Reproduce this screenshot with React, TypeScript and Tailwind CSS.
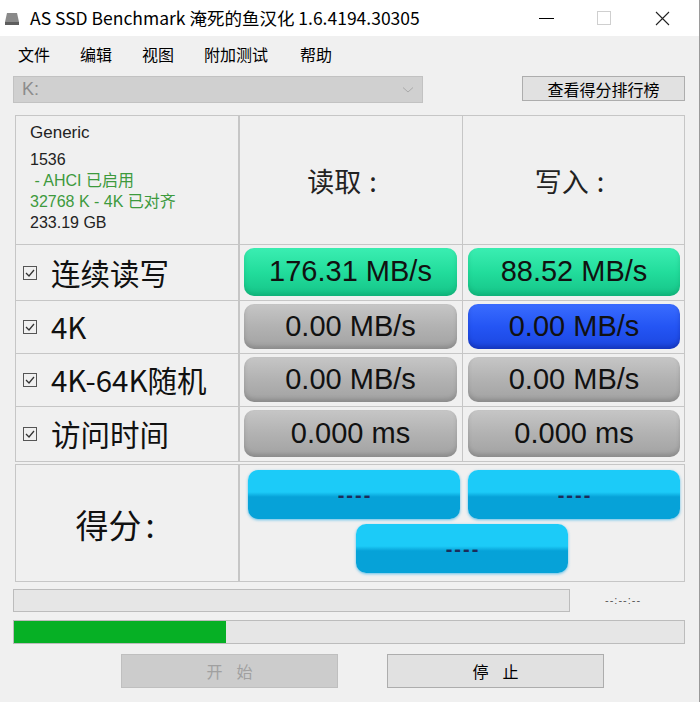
import React from "react"

const cjk = "font-['Noto_Sans_CJK_SC','Noto_Sans',sans-serif]"
const arial = "font-['Liberation_Sans','Noto_Sans_CJK_SC',sans-serif]"

const pillStyles: Record<string, string> = {
  green: "bg-linear-to-b from-[#3aeeb2] via-[#22dd9c] to-[#15c488] shadow-[inset_0_-3px_4px_rgba(0,120,70,0.25)]",
  gray: "bg-linear-to-b from-[#c6c6c6] via-[#b2b2b2] to-[#a2a2a2] shadow-[inset_0_-3px_4px_rgba(0,0,0,0.15)]",
  blue: "bg-linear-to-b from-[#3a6cff] via-[#2455f4] to-[#1b46e0] shadow-[inset_0_-3px_4px_rgba(0,0,80,0.25)]",
}

function CheckBox() {
  return (
    <svg width="14" height="14" viewBox="0 0 14 14" className="shrink-0">
      <rect x="0.5" y="0.5" width="13" height="13" fill="none" stroke="#555" />
      <path d="M3 7 L6 10 L11 4" fill="none" stroke="#333" strokeWidth="1.3" />
    </svg>
  )
}

function Pill({ value, color }: { value: string; color: string }) {
  return (
    <div
      className={`h-full w-full rounded-[10px] flex items-center justify-center text-[29px] text-[#111] ${arial} ${pillStyles[color]}`}
    >
      {value}
    </div>
  )
}

function ScorePill() {
  return (
    <div className="w-[212px] h-[49px] rounded-[10px] bg-linear-to-b from-[#1ccbf8] from-45% to-[#06a2d8] to-55% shadow-[0_1px_3px_rgba(0,160,230,0.6)] flex items-center justify-center">
      <span className={`text-[20px] font-black tracking-[2px] pl-[2px] text-[#1b2c5a] ${arial}`}>----</span>
    </div>
  )
}

const rows = [
  { label: "连续读写", read: "176.31 MB/s", write: "88.52 MB/s", rc: "green", wc: "green", h: "h-[56px]" },
  { label: "4K", read: "0.00 MB/s", write: "0.00 MB/s", rc: "gray", wc: "blue", h: "h-[53px]" },
  { label: "4K-64K随机", read: "0.00 MB/s", write: "0.00 MB/s", rc: "gray", wc: "gray", h: "h-[53px]" },
  { label: "访问时间", read: "0.000 ms", write: "0.000 ms", rc: "gray", wc: "gray", h: "h-[54px]" },
]

export default function App() {
  return (
    <div className={`w-[700px] h-[702px] bg-[#f0f0f0] overflow-hidden border-r border-[#9a9a9a] ${cjk}`}>
      {/* title bar */}
      <div className="h-[36px] bg-white flex items-center">
        <svg width="16" height="14" viewBox="0 0 16 14" className="ml-[4px]">
          <path d="M3 2 H13 L15 11 H1 Z" fill="#8a8a8a" />
          <rect x="1" y="11" width="14" height="3" fill="#5e5e5e" />
        </svg>
        <span className="ml-[10px] text-[17.5px] text-black">AS SSD Benchmark 淹死的鱼汉化 1.6.4194.30305</span>
        <div className="ml-auto flex items-center h-full">
          <div className="w-[58px] h-full flex items-center justify-center">
            <div className="w-[15px] h-px bg-black" />
          </div>
          <div className="w-[58px] h-full flex items-center justify-center">
            <div className="w-[14px] h-[14px] border border-[#cfcfcf]" />
          </div>
          <div className="w-[58px] h-full flex items-center justify-center mr-[8px]">
            <svg width="15" height="15" viewBox="0 0 15 15">
              <path d="M1 1 L14 14 M14 1 L1 14" stroke="#222" strokeWidth="1.1" />
            </svg>
          </div>
        </div>
      </div>

      {/* menu */}
      <div className="h-[36px] flex items-center text-[16px] text-black pl-[18px]">
        <span className="w-[62px]">文件</span>
        <span className="w-[62px]">编辑</span>
        <span className="w-[62px]">视图</span>
        <span className="w-[96px]">附加测试</span>
        <span>帮助</span>
      </div>

      {/* drive row */}
      <div className="flex items-start h-[43px] pt-[4px] pl-[13px]">
        <div className="w-[410px] h-[27px] bg-[#d0d0d0] border border-[#c2c2c2] flex items-center justify-between px-[8px]">
          <span className={`text-[18px] text-[#8c8c8c] ${arial}`}>K:</span>
          <svg width="12" height="8" viewBox="0 0 12 8">
            <path d="M1 1.5 L6 6 L11 1.5" fill="none" stroke="#aaa" strokeWidth="1" />
          </svg>
        </div>
        <button className="ml-[99px] w-[163px] h-[25px] bg-[#e1e1e1] border border-[#adadad] text-[16px] text-black leading-none">
          查看得分排行榜
        </button>
      </div>

      {/* results table */}
      <div className="ml-[15px] w-[670px] border border-[#c6c6c6]">
        <div className="flex h-[129px] border-b border-[#c6c6c6]">
          <div className={`w-[224px] border-r-2 border-double border-[#c6c6c6] pl-[14px] pt-[5px] text-[16px] leading-[21px] text-[#222] ${arial}`}>
            <div className="text-[17px] leading-[24px] mb-[4px]">Generic</div>
            <div>1536</div>
            <div className="text-[#3d9a3d]">&nbsp;- AHCI 已启用</div>
            <div className="text-[#3d9a3d]">32768 K - 4K 已对齐</div>
            <div>233.19 GB</div>
          </div>
          <div className="w-[223px] border-r border-[#c6c6c6] flex items-center justify-center text-[27px] text-[#222] pt-[2px] pr-[18px]">
            读取<span className="ml-[8px]">:</span>
          </div>
          <div className="flex-1 flex items-center justify-center text-[27px] text-[#222] pt-[2px] pr-[8px]">
            写入<span className="ml-[8px]">:</span>
          </div>
        </div>
        {rows.map((r, i) => (
          <div key={r.label} className={`flex ${r.h} ${i < rows.length - 1 ? "border-b border-[#c6c6c6]" : ""}`}>
            <div className="w-[224px] border-r-2 border-double border-[#c6c6c6] flex items-center pl-[7px] gap-[14px]">
              <CheckBox />
              <span className="text-[29.5px] text-[#111] leading-none">{r.label}</span>
            </div>
            <div className="w-[223px] border-r border-[#c6c6c6] pl-[4px] pr-[5px] pt-[3px] pb-[4px]">
              <Pill value={r.read} color={r.rc} />
            </div>
            <div className="flex-1 pl-[5px] pr-[4px] pt-[3px] pb-[4px]">
              <Pill value={r.write} color={r.wc} />
            </div>
          </div>
        ))}
      </div>

      {/* score */}
      <div className="ml-[15px] mt-[2px] w-[670px] h-[118px] border border-[#c6c6c6] flex">
        <div className="w-[224px] border-r-2 border-double border-[#c6c6c6] flex items-center justify-center pt-[4px] pr-[24px]">
          <span className="text-[33px] text-[#111]">
            得分<span className="ml-[4px]">:</span>
          </span>
        </div>
        <div className="flex-1 flex flex-col items-center pt-[5px] gap-[5px]">
          <div className="flex gap-[8px] pl-[4px]">
            <ScorePill />
            <ScorePill />
          </div>
          <ScorePill />
        </div>
      </div>

      {/* progress */}
      <div className="flex items-center mt-[7px] pl-[13px]">
        <div className="w-[557px] h-[23px] bg-[#e6e6e6] border border-[#bcbcbc]" />
        <span className={`ml-[35px] text-[11px] text-[#555] tracking-[1px] ${arial}`}>--:--:--</span>
      </div>
      <div className="ml-[13px] mt-[8px] w-[672px] h-[24px] bg-[#e6e6e6] border border-[#bcbcbc]">
        <div className="h-full w-[212px] bg-[#06b025]" />
      </div>

      {/* buttons */}
      <div className="flex mt-[10px] pl-[121px] gap-[49px]">
        <button className="w-[217px] h-[34px] bg-[#cccccc] border border-[#bfbfbf] text-[16px] text-[#a0a0a0] tracking-[14px] pl-[14px]">
          开始
        </button>
        <button className="w-[217px] h-[34px] bg-[#e1e1e1] border border-[#adadad] text-[16px] text-black tracking-[14px] pl-[14px]">
          停止
        </button>
      </div>
    </div>
  )
}
